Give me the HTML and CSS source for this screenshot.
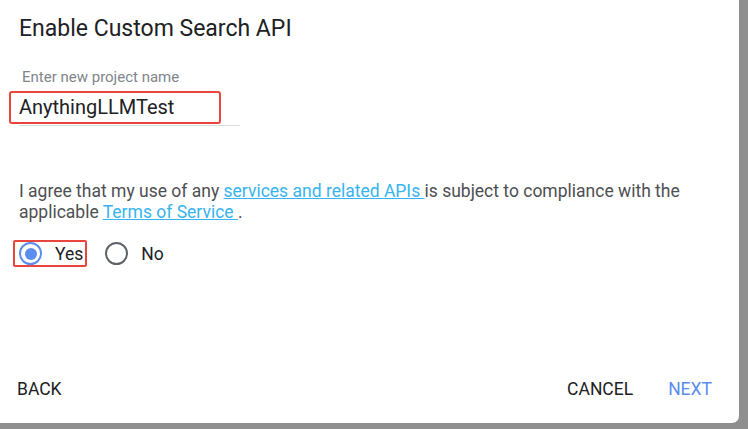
FILE: index.html
```html
<!DOCTYPE html>
<html lang="en">
  <head>
    <meta charset="UTF-8" />
    <meta name="viewport" content="width=device-width, initial-scale=1.0" />
    <title>Enable Custom Search API</title>
    <link rel="stylesheet" href="styles.css">
  </head>
  <body>
    <div class="dialog">
      <h2 class="title">Enable Custom Search API</h2>

      <div class="field">
        <label class="field-label" for="project">Enter new project name</label>
        <div class="field-box">
          <span class="highlight">
            <input type="text" id="project" value="AnythingLLMTest" />
          </span>
        </div>
      </div>

      <p class="terms">
        I agree that my use of any <a href="#">services and related APIs </a> is subject to compliance with the
        applicable <a href="#">Terms of Service </a>.
      </p>

      <div class="choices">
        <label class="choice highlight-radio">
          <span class="radio checked"></span>
          <span class="choice-text">Yes</span>
        </label>
        <label class="choice">
          <span class="radio"></span>
          <span class="choice-text">No</span>
        </label>
      </div>

      <div class="actions">
        <button class="btn">Back</button>
        <div class="actions-right">
          <button class="btn">Cancel</button>
          <button class="btn primary">Next</button>
        </div>
      </div>
    </div>
  </body>
</html>
```

FILE: styles.css
```css
body {
  margin: 0;
  padding: 0;
  background: #8f8f8f;
  font-family: Roboto, "Noto Sans", Arial, sans-serif;
  height: 100vh;
  overflow: hidden;
}
.dialog {
  background: #fff;
  width: 739px;
  height: 423px;
  border-bottom-right-radius: 7px;
  box-sizing: border-box;
  display: flex;
  flex-direction: column;
  padding: 15px 0 0 19px;
}
.title {
  margin: 0;
  font-size: 23px;
  line-height: 28px;
  font-weight: 400;
  color: #202124;
}
.field {
  margin-top: 26px;
  width: 221px;
}
.field-label {
  display: block;
  margin-left: 3px;
  font-size: 15px;
  line-height: 16px;
  color: #80868b;
}
.field-box {
  margin-top: 6px;
  border-bottom: 1px solid #dadce0;
  padding-bottom: 1px;
}
.highlight {
  display: block;
  width: 212px;
  margin-left: -10px;
  border: 2px solid #e8453c;
  border-radius: 3px;
  box-sizing: border-box;
  padding: 2px 0 3px 8px;
}
.highlight input {
  border: none;
  outline: none;
  padding: 0;
  width: 195px;
  font-family: inherit;
  font-size: 20px;
  line-height: 24px;
  color: #202124;
  background: transparent;
}
.terms {
  margin: 55px 0 0 0;
  width: 700px;
  font-size: 17.5px;
  line-height: 21px;
  color: #4d4f53;
}
.terms a {
  color: #37b4ef;
}
.choices {
  display: flex;
  align-items: center;
  gap: 18px;
  margin-top: 17px;
  margin-left: -6px;
}
.choice {
  display: flex;
  align-items: center;
  gap: 13px;
  font-size: 17.5px;
  color: #202124;
  height: 27px;
  box-sizing: border-box;
}
.highlight-radio {
  border: 2px solid #e8453c;
  border-radius: 2px;
  padding: 0 2px 0 4px;
}
.radio {
  width: 23px;
  height: 23px;
  border: 2px solid #5f6368;
  border-radius: 50%;
  box-sizing: border-box;
  display: flex;
  align-items: center;
  justify-content: center;
}
.radio.checked {
  border-color: #5b8def;
}
.radio.checked::after {
  content: "";
  width: 12px;
  height: 12px;
  border-radius: 50%;
  background: #5b8def;
}
.actions {
  margin-top: auto;
  margin-bottom: 18px;
  margin-left: -10px;
  margin-right: 19px;
  display: flex;
  justify-content: space-between;
  align-items: center;
}
.actions-right {
  display: flex;
  gap: 19px;
}
.btn {
  border: none;
  background: none;
  padding: 6px 8px;
  font-family: inherit;
  font-size: 17.5px;
  line-height: 20px;
  text-transform: uppercase;
  color: #202124;
  cursor: pointer;
}
.btn.primary {
  color: #5b8def;
}
```
